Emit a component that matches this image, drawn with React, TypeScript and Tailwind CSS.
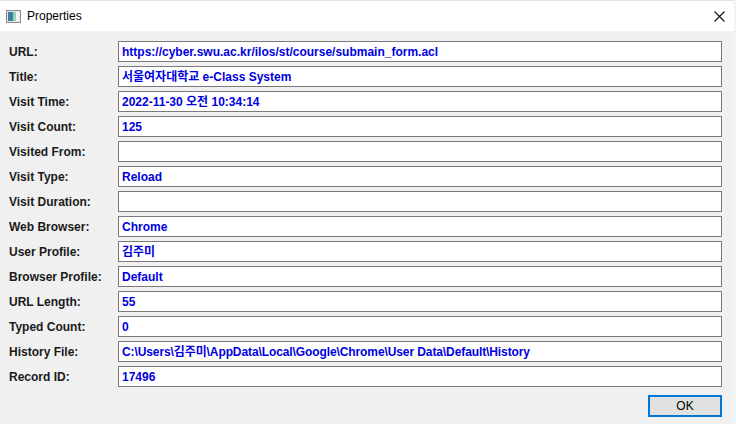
const rows: [string, string][] = [
  ["URL:", "https://cyber.swu.ac.kr/ilos/st/course/submain_form.acl"],
  ["Title:", "서울여자대학교 e-Class System"],
  ["Visit Time:", "2022-11-30 오전 10:34:14"],
  ["Visit Count:", "125"],
  ["Visited From:", ""],
  ["Visit Type:", "Reload"],
  ["Visit Duration:", ""],
  ["Web Browser:", "Chrome"],
  ["User Profile:", "김주미"],
  ["Browser Profile:", "Default"],
  ["URL Length:", "55"],
  ["Typed Count:", "0"],
  ["History File:", "C:\\Users\\김주미\\AppData\\Local\\Google\\Chrome\\User Data\\Default\\History"],
  ["Record ID:", "17496"],
];

function AppIcon() {
  return (
    <svg width="15" height="13" viewBox="0 0 15 13" className="mt-[1px]">
      <rect x="0.5" y="0.5" width="14" height="12" fill="#e8e8e8" stroke="#8a8a8a" />
      <rect x="2" y="2" width="5" height="9" fill="#3c7fa0" />
      <rect x="7" y="2" width="3" height="9" fill="#9bd0b8" />
      <rect x="10" y="2" width="3" height="9" fill="#f4f4f4" />
    </svg>
  );
}

function CloseIcon() {
  return (
    <svg width="11" height="11" viewBox="0 0 11 11" className="ml-auto">
      <path d="M0.5 0.5 L10.5 10.5 M10.5 0.5 L0.5 10.5" stroke="#111" strokeWidth="1.1" />
    </svg>
  );
}

export default function App() {
  return (
    <div className="flex h-[424px] w-[736px] overflow-hidden bg-[#f0f0f0] font-['Liberation_Sans','Noto_Sans_CJK_KR',sans-serif]">
      <div className="flex w-[734px] flex-col">
        <div className="flex h-[31px] items-center border-t border-[#e4e4e4] bg-white pl-[6px] pr-[9px]">
          <AppIcon />
          <span className="ml-[6px] text-[12px] text-black">Properties</span>
          <CloseIcon />
        </div>
        <div className="flex flex-1 flex-col pt-[10px]">
          <div className="flex flex-col gap-[4px]">
            {rows.map(([label, value]) => (
              <div key={label} className="flex h-[21px] items-center">
                <span className="w-[118px] pl-[9px] text-[12px] font-bold text-[#1a1a1a]">{label}</span>
                <div
                  className={
                    label === "History File:"
                      ? "flex h-[21px] w-[604px] items-center border border-[#7a7a7a] bg-white px-[3px] text-[12px] font-bold tracking-[-0.1px] text-[#0000e0]"
                      : "flex h-[21px] w-[604px] items-center border border-[#7a7a7a] bg-white px-[3px] text-[12px] font-bold text-[#0000e0]"
                  }
                >
                  {value}
                </div>
              </div>
            ))}
          </div>
          <div className="mt-[8px] flex pr-[12px]">
            <button
              type="button"
              className="ml-auto flex h-[22px] w-[74px] items-center justify-center border-2 border-[#0078d7] bg-[#e1e1e1] text-[12px] text-black"
            >
              OK
            </button>
          </div>
        </div>
      </div>
      <div className="flex w-[2px] flex-col bg-[#e9f7f9]" />
    </div>
  );
}
